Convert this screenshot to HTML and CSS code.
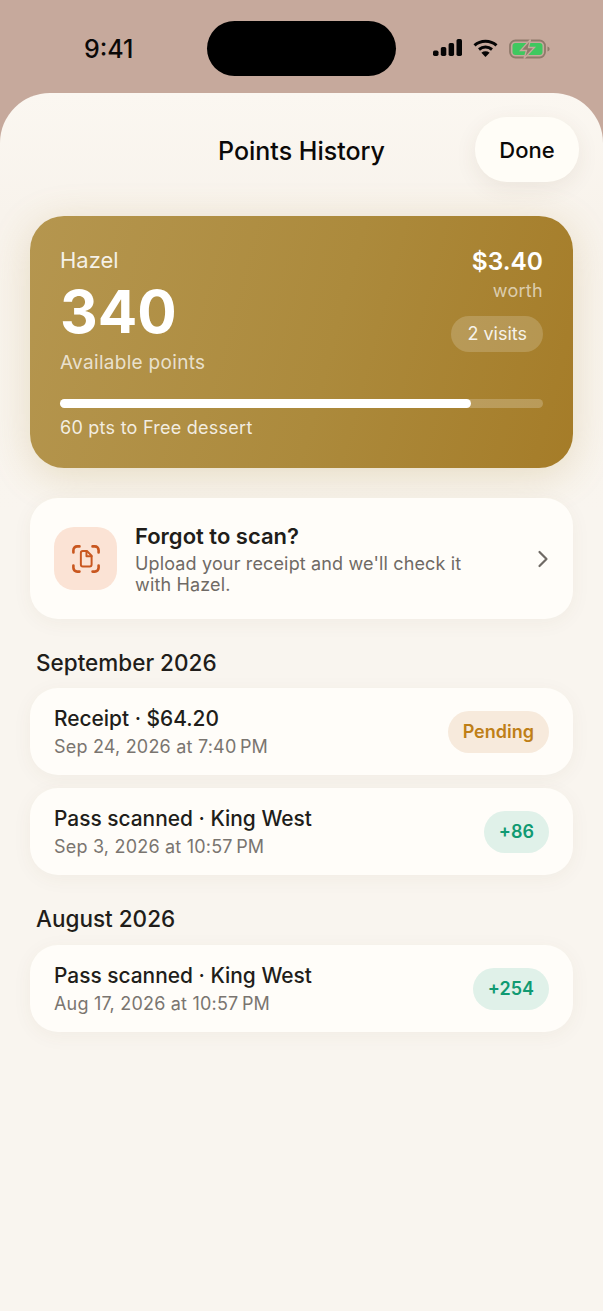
FILE: index.html
```html
<!DOCTYPE html>
<html>
<head>
    <meta charset="UTF-8">
    <title>Points History</title>
    <link rel="stylesheet" href="styles.css">
</head>
<body>
    <div class="status-bar">
        <span class="clock">9:41</span>
        <div class="island"></div>
        <div class="status-icons">
            <svg class="icon-signal" width="29" height="17" viewBox="0 0 29 17">
                <rect x="0" y="11.500" width="5.500" height="5.500" rx="1.700" fill="#050505"/>
                <rect x="7.800" y="8" width="5.500" height="9" rx="1.700" fill="#050505"/>
                <rect x="15.600" y="4" width="5.500" height="13" rx="1.700" fill="#050505"/>
                <rect x="23.500" y="0" width="5.500" height="17" rx="1.700" fill="#050505"/>
            </svg>
            <svg class="icon-wifi" width="25" height="18" viewBox="0 0 25 18">
                <path d="M1.500 6.300C7.700 0.800 17.300 0.800 23.500 6.300" fill="none" stroke="#050505" stroke-width="3"/>
                <path d="M6 10.500C9.800 7.300 15.200 7.300 19 10.500" fill="none" stroke="#050505" stroke-width="3"/>
                <path d="M12.500 18L8.400 13.700C10.800 11.900 14.200 11.900 16.600 13.700Z" fill="#050505"/>
            </svg>
            <svg class="icon-battery" width="41" height="20" viewBox="0 0 41 20">
                <rect x="1" y="1.500" width="35" height="17" rx="5.500" fill="none" stroke="#8f7a6b" stroke-width="1.800"/>
                <rect x="3.500" y="4" width="30" height="12" rx="3" fill="#3fc85f"/>
                <path d="M38.500 7.500C40 8 40.600 8.900 40.600 10S40 12 38.500 12.500Z" fill="#8f7a6b"/>
                <path d="M21.500 0.500L11.500 11.500H17.500L15 19.500L25.500 8.500H19.500Z" fill="#8f7a6b" stroke="#c6a99c" stroke-width="1.300"/>
            </svg>
        </div>
    </div>

    <div class="sheet">
        <div class="sheet-header">
            <h1 class="sheet-title">Points History</h1>
            <button class="done-btn">Done</button>
        </div>

        <div class="points-card">
            <div class="points-top">
                <div>
                    <div class="store-name">Hazel</div>
                    <div class="points-value">340</div>
                    <div class="points-label">Available points</div>
                </div>
                <div class="points-side">
                    <div class="worth-value">$3.40</div>
                    <div class="worth-label">worth</div>
                    <div class="visits-pill">2 visits</div>
                </div>
            </div>
            <div class="progress-track"><div class="progress-fill" style="width: 85%"></div></div>
            <div class="progress-label">60 pts to Free dessert</div>
        </div>

        <div class="scan-card">
            <div class="scan-icon">
                <svg width="28" height="28" viewBox="0 0 30 30" fill="none" stroke="#c9571f" stroke-width="2.800" stroke-linecap="round" stroke-linejoin="round">
                    <path d="M1.500 8V5.500A4 4 0 0 1 5.500 1.500H8"/>
                    <path d="M22 1.500H24.500A4 4 0 0 1 28.500 5.500V8"/>
                    <path d="M1.500 22V24.500A4 4 0 0 0 5.500 28.500H8"/>
                    <path d="M28.500 22V24.500A4 4 0 0 1 24.500 28.500H22"/>
                    <path d="M9.500 8.500A2 2 0 0 1 11.500 6.500H16L21 11.500V21A2 2 0 0 1 19 23H11.500A2 2 0 0 1 9.500 21Z" stroke-width="2.100"/>
                    <path d="M15.500 6.500V12H21" stroke-width="2.100"/>
                </svg>
            </div>
            <div class="scan-text">
                <div class="scan-title">Forgot to scan?</div>
                <div class="scan-desc">Upload your receipt and we'll check it with Hazel.</div>
            </div>
            <svg class="chevron" width="12" height="18" viewBox="0 0 12 18" fill="none" stroke="#6f6a65" stroke-width="2.200" stroke-linecap="round" stroke-linejoin="round">
                <path d="M2.500 2L9.500 9L2.500 16"/>
            </svg>
        </div>

        <h2 class="month-title">September 2026</h2>
        <div class="history-list">
            <div class="history-row">
                <div>
                    <div class="row-title">Receipt · $64.20</div>
                    <div class="row-date">Sep 24, 2026 at 7:40&#8201;PM</div>
                </div>
                <span class="badge badge-pending">Pending</span>
            </div>
            <div class="history-row">
                <div>
                    <div class="row-title">Pass scanned · King West</div>
                    <div class="row-date">Sep 3, 2026 at 10:57&#8201;PM</div>
                </div>
                <span class="badge badge-earned">+86</span>
            </div>
        </div>

        <h2 class="month-title">August 2026</h2>
        <div class="history-list">
            <div class="history-row">
                <div>
                    <div class="row-title">Pass scanned · King West</div>
                    <div class="row-date">Aug 17, 2026 at 10:57&#8201;PM</div>
                </div>
                <span class="badge badge-earned">+254</span>
            </div>
        </div>
    </div>
</body>
</html>
```

FILE: styles.css
```css
* {
    box-sizing: border-box;
}

html,
body {
    height: 100%;
}

body {
    margin: 0;
    display: flex;
    flex-direction: column;
    overflow: hidden;
    background: #c6a99c;
    font-family: Inter, "Noto Sans", sans-serif;
    color: #211d1a;
}

.status-bar {
    position: relative;
    flex: none;
    height: 93px;
    display: flex;
    justify-content: space-between;
    padding: 36px 53px 0 84px;
}

.clock {
    font-size: 25px;
    line-height: 26px;
    font-weight: 500;
    color: #0b0908;
}

.island {
    position: absolute;
    left: 207px;
    top: 21px;
    width: 189px;
    height: 55px;
    border-radius: 28px;
    background: #000;
}

.status-icons {
    display: flex;
    align-items: flex-start;
    gap: 11px;
    padding-top: 3px;
}

.sheet {
    flex: 1;
    padding: 0 30px;
    border-radius: 50px 50px 0 0;
    background: linear-gradient(#fbf7f1 0, #f8f3ec 120px, #f9f5ef 420px);
}

.sheet-header {
    position: relative;
    height: 123px;
    padding-top: 24px;
    display: flex;
    justify-content: flex-end;
    align-items: flex-start;
}

.sheet-title {
    position: absolute;
    left: 0;
    right: 0;
    top: 41px;
    margin: 0;
    text-align: center;
    font-size: 25px;
    line-height: 34px;
    font-weight: 500;
    color: #0b0908;
}

.done-btn {
    width: 104px;
    height: 65px;
    margin-right: -6px;
    border: none;
    border-radius: 32px;
    background: #fffdf7;
    box-shadow: 0 6px 22px rgba(90, 70, 40, 0.08);
    font-family: inherit;
    font-size: 22px;
    font-weight: 500;
    color: #0b0908;
}

.points-card {
    height: 252px;
    padding: 30px 30px 0;
    border-radius: 34px;
    background: linear-gradient(105deg, #b5964f 0%, #ac8a3c 55%, #a57c28 100%);
    box-shadow: 0 8px 40px rgba(170, 130, 40, 0.22);
    color: #fff;
}

.points-top {
    height: 153px;
    display: flex;
    justify-content: space-between;
}

.store-name {
    font-size: 22px;
    line-height: 28px;
    color: rgba(255, 255, 255, 0.88);
}

.points-value {
    margin-top: 7px;
    font-size: 58.500px;
    line-height: 62px;
    font-weight: 700;
}

.points-label {
    margin-top: 7px;
    font-size: 19px;
    line-height: 26px;
    letter-spacing: 0.3px;
    color: rgba(255, 255, 255, 0.74);
}

.points-side {
    display: flex;
    flex-direction: column;
    align-items: flex-end;
}

.worth-value {
    margin-top: -1px;
    font-size: 24.500px;
    line-height: 32px;
    font-weight: 600;
}

.worth-label {
    margin-top: 1px;
    font-size: 18px;
    line-height: 25px;
    letter-spacing: 0.3px;
    color: rgba(255, 255, 255, 0.62);
}

.visits-pill {
    margin-top: 13px;
    height: 36px;
    padding: 0 16px;
    border-radius: 18px;
    background: rgba(255, 255, 255, 0.18);
    font-size: 18px;
    line-height: 36px;
    color: rgba(255, 255, 255, 0.9);
}

.progress-track {
    height: 9px;
    border-radius: 5px;
    background: rgba(255, 255, 255, 0.22);
}

.progress-fill {
    height: 100%;
    border-radius: 5px;
    background: #fff;
}

.progress-label {
    margin-top: 8px;
    font-size: 18px;
    line-height: 24px;
    letter-spacing: 0.25px;
    color: rgba(255, 255, 255, 0.85);
}

.scan-card {
    height: 121px;
    margin-top: 30px;
    padding: 0 24px;
    display: flex;
    align-items: center;
    border-radius: 28px;
    background: #fffdf9;
    box-shadow: 0 4px 20px rgba(90, 70, 40, 0.05);
}

.scan-icon {
    flex: none;
    width: 63px;
    height: 63px;
    margin-right: 18px;
    display: flex;
    align-items: center;
    justify-content: center;
    border-radius: 20px;
    background: #fbe3d5;
}

.scan-text {
    flex: 1;
    padding-right: 60px;
}

.scan-title {
    font-size: 22px;
    line-height: 28px;
    font-weight: 600;
}

.scan-desc {
    margin-top: 3px;
    font-size: 18px;
    line-height: 21px;
    letter-spacing: 0.15px;
    color: #6f6a65;
}

.chevron {
    flex: none;
}

.month-title {
    margin: 30px 6px 11px;
    font-size: 22.500px;
    line-height: 28px;
    font-weight: 500;
}

.history-list + .month-title {
    margin-bottom: 12px;
}

.history-list {
    display: flex;
    flex-direction: column;
    gap: 13px;
}

.history-row {
    height: 87px;
    padding: 0 24px;
    display: flex;
    align-items: center;
    justify-content: space-between;
    border-radius: 28px;
    background: #fffdf9;
    box-shadow: 0 4px 20px rgba(90, 70, 40, 0.05);
}

.row-title {
    font-size: 20.900px;
    line-height: 28px;
    font-weight: 500;
}

.row-date {
    margin-top: 2px;
    font-size: 18px;
    line-height: 24px;
    letter-spacing: 0.2px;
    color: #7a7570;
}

.badge {
    height: 42px;
    padding: 0 15px;
    border-radius: 21px;
    font-size: 18px;
    line-height: 42px;
    font-weight: 600;
}

.badge-pending {
    background: #f7eadc;
    color: #bf7f17;
}

.badge-earned {
    background: #e0f1e9;
    color: #109a72;
}
```
